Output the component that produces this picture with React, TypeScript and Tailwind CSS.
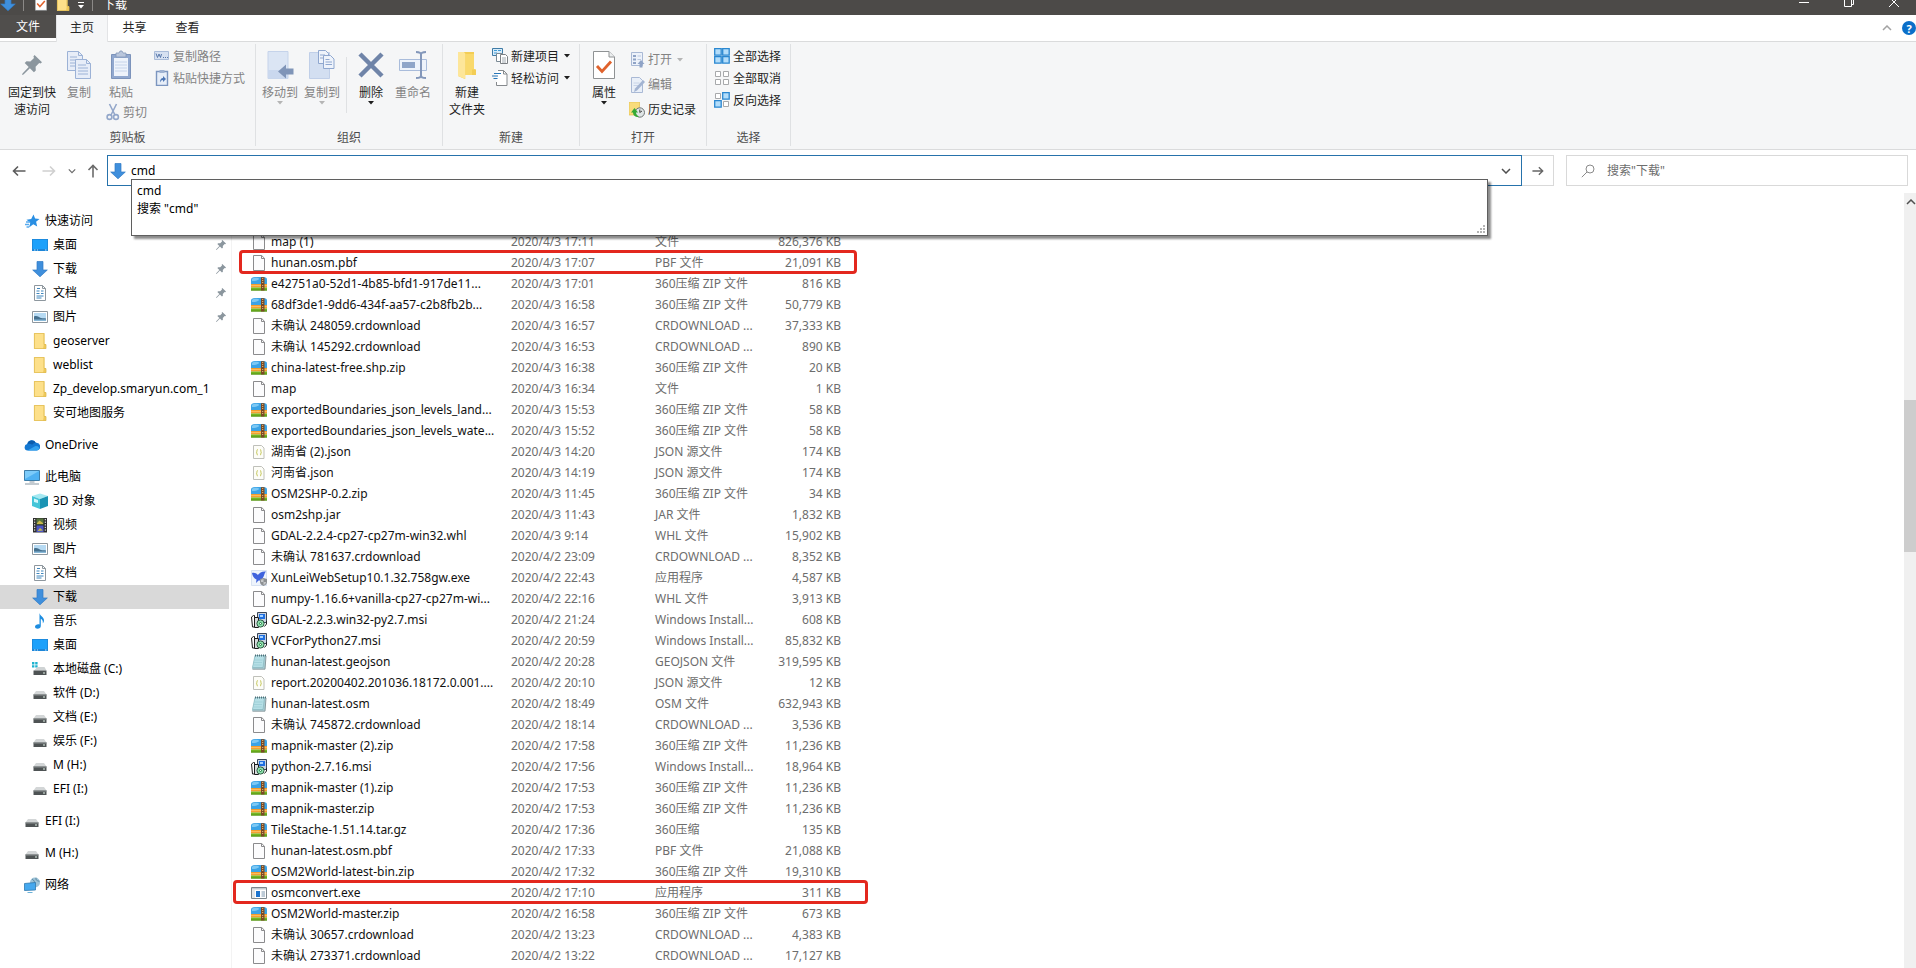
import type { ReactNode } from "react";
import clsx from "clsx";

/* ---------- icons ---------- */

type IconProps = { className?: string };

const DownArrow = ({ className = "size-4" }: IconProps) => (
  <svg viewBox="0 0 16 16" className={className}>
    <path d="M5 .5h6V9h4.300L8 15.800.7 9H5z" fill="#3f8fdc" stroke="#2f7ac4" strokeWidth=".7" />
  </svg>
);

const Folder = ({ className = "size-4" }: IconProps) => (
  <svg viewBox="0 0 16 16" className={className}>
    <path d="M2 0h10.500v11L14 11v5H2z" fill="#f7d774" />
    <path d="M2.400.4h9.200v15.200H2.400z" fill="#fde08a" />
    <path d="M12 11h2v5h-3z" fill="#efc95a" />
    <path d="M2.400.4h9.600v11l2 .2v4H2.400z" fill="none" stroke="#e0bb54" strokeWidth=".8" />
  </svg>
);

const Star = () => (
  <svg viewBox="0 0 16 16" className="size-4">
    <path d="m9.500 1.500 1.600 4 4.400.4-3.400 2.900 1.100 4.700-3.900-2.300L5 14.500l1.300-4.800-3.800-3 4.700-.6z" fill="#2a8fe3" />
    <path d="M2 9h4M1 11.500h4M2.500 14H5" stroke="#58abee" strokeWidth="1.300" />
  </svg>
);

const Desktop = () => (
  <svg viewBox="0 0 16 16" className="size-4">
    <path d="M0 2h16v12H0z" fill="#1d86d8" />
    <path d="M.8 2.800h14.400v9.200H.8z" fill="#1da1fb" />
    <path d="M2 13h1.500M5 13h1M13 13h1.500" stroke="#bfe3ff" strokeWidth="1" />
  </svg>
);

const Doc = () => (
  <svg viewBox="0 0 16 16" className="size-4">
    <path d="M2.500.5h8L13.500 3.500v12h-11z" fill="#fff" stroke="#8e979e" />
    <path d="M10.500.5v3h3" fill="none" stroke="#8e979e" />
    <path d="M4.500 6h3M4.500 8.500h3M4.500 11h7M4.500 13h5M9 6h2.500M9 8.500h2.500M5 3.500h3" stroke="#3f86bd" />
  </svg>
);

const Picture = () => (
  <svg viewBox="0 0 16 16" className="size-4">
    <path d="M.5 2.500h15v11H.5z" fill="#fff" stroke="#8e979e" />
    <path d="M2 4h12v8H2z" fill="#b6daf3" />
    <path d="M2 7.500c3-1.500 5 1 7 1.500s3 0 5 .5V12H2z" fill="#46718f" />
    <path d="M2 10.500h12V12H2z" fill="#89b9d8" />
  </svg>
);

const Cloud = () => (
  <svg viewBox="0 0 16 16" className="size-4">
    <path d="M3.500 13.500a3.300 3.300 0 0 1-.3-6.500 4.600 4.600 0 0 1 8.600-1.300 3.900 3.900 0 0 1 .9 7.800z" fill="#1478d2" />
    <path d="M3.400 7a4.600 4.600 0 0 1 8.400-1.300c-1.800 0-3 1-3.500 2C6.500 6.500 5 6.500 3.400 7z" fill="#0b5cad" />
    <path d="M3.500 13.500 11 9.200c1.500-.3 3 .1 4 1.100.8 1.700-.5 3.200-2.300 3.200z" fill="#35a4f0" />
  </svg>
);

const Computer = () => (
  <svg viewBox="0 0 16 16" className="size-4">
    <path d="M.5 1.500h15v10H.5z" fill="#4eb1f2" stroke="#3e7ea9" />
    <path d="M1 2h14L1 10z" fill="#7ccbfa" />
    <path d="M5.500 13h5M1 15h14" stroke="#8797a3" />
  </svg>
);

const Cube = () => (
  <svg viewBox="0 0 16 16" className="size-4">
    <path d="m0 3 8-2.500L16 3 8 6z" fill="#a5e9f2" />
    <path d="M0 3v10l8 3V6z" fill="#45c5d8" />
    <path d="M16 3v10l-8 3V6z" fill="#1a93b3" />
    <path d="M2 5.500 6 7v3L2 9z" fill="#d4f7fb" />
  </svg>
);

const Film = () => (
  <svg viewBox="0 0 16 16" className="size-4">
    <path d="M1 1h14v14.500H1z" fill="#2e2e2e" />
    <path d="M4.500 1.500h7v6h-7z" fill="#56743e" />
    <path d="M4.500 8.500h7V15h-7z" fill="#4d57c4" />
    <path d="m5 6 2.500-2.500L11 6v1H5zM5.500 14 8 11l3 2.500" fill="#c9b84a" />
    <path d="M2.700 2v13M13.300 2v13" stroke="#fff" strokeWidth="1" strokeDasharray="1.300 1.300" />
  </svg>
);

const Music = () => (
  <svg viewBox="0 0 16 16" className="size-4">
    <path d="M7.500 0c.5 3 4.500 4 4.500 7.200 0 1.300-.5 2.300-1.200 3 .4-2.200-.5-3.700-2-4.400V13c0 1.700-1.400 2.800-3.200 2.800-1.500 0-2.600-.8-2.600-2 0-1.500 1.600-2.600 3.300-2.600.4 0 .8 0 1.200.2z" fill="#1d8de0" />
  </svg>
);

const Drive = () => (
  <svg viewBox="0 0 16 16" className="size-4">
    <path d="M4 6h8l2.500 3.500h-13z" fill="#d3d6d7" />
    <path d="M1.500 9.500h13v4.500h-13z" fill="#4e5354" />
    <path d="M1.500 9.300h13v1.200h-13z" fill="#8a9091" />
    <path d="M11 12h2" stroke="#dff2e6" strokeWidth="1.200" />
  </svg>
);

const SystemDrive = () => (
  <svg viewBox="0 0 16 16" className="size-4">
    <path d="M0 1h2.400v2.400H0zM3.200 1h2.400v2.400H3.200zM0 4.200h2.400v2.400H0zM3.200 4.200h2.400v2.400H3.200z" fill="#1eb2cf" />
    <path d="M5.500 6h7l2 3.500H2z" fill="#cfd3d4" />
    <path d="M1.500 9.500h13V14h-13z" fill="#4e5354" />
    <path d="M11 12h2" stroke="#dff2e6" strokeWidth="1.200" />
  </svg>
);

const Network = () => (
  <svg viewBox="0 0 16 16" className="size-4">
    <circle cx="11" cy="5.500" r="5" fill="#9dc3d8" />
    <path d="M8 2c2 1 3 3 2.500 5M12 .8c-.5 2 .5 3 3.500 3.500" fill="none" stroke="#5d8aa3" />
    <path d="m.5 6.500 11-1v7.500l-11 .5z" fill="#45a8ee" stroke="#2f78ae" strokeWidth=".8" />
    <path d="M3.500 15.500h5" stroke="#6db2d8" />
  </svg>
);

const Pin = ({ className = "size-3" }: IconProps) => (
  <svg viewBox="0 0 20 20" className={className} fill="#8b969e">
    <path d="M12.500 0 20 7.200l-1.500 1.300-1.300-.4-3.600 3.700.2 3.700-1.900 1.700-4-4L1.500 19.500 0 20l.5-1.500 6.200-6.400-4-4L4.500 6.300l3.900.1L12 3l-.6-1.600z" />
  </svg>
);

const Page = () => (
  <svg viewBox="0 0 16 16" className="size-4">
    <path d="M2.500.5h8.200l2.800 2.800v12.200h-11z" fill="#fcfcfd" stroke="#8b8b8d" />
    <path d="M10.500.5v3h3" fill="none" stroke="#8b8b8d" />
  </svg>
);

const Zip = () => (
  <svg viewBox="0 0 16 16" className="size-4">
    <path d="M0 3.500C0 2 1.500 1 4 1h8c3 0 4 1.200 4 2.500V9H0z" fill="#3ba3e6" />
    <path d="M1 3c1-1.500 6-1.500 7-.5S5 5.500 1 5z" fill="#7cc8f4" />
    <path d="M0 8h16v3.500H0z" fill="#f39c2b" />
    <path d="M0 9.300h16v.8H0z" fill="#ffc971" />
    <path d="M0 11.500h16v3H0z" fill="#74b722" />
    <path d="M0 13.600h16v.9H0z" fill="#4f8c15" />
    <path d="M10 1.200h3.500v13.300H10z" fill="#7a4a26" />
    <path d="M11.700 2v5M11.700 9v4" stroke="#f1c27a" strokeDasharray="1 1" />
  </svg>
);

const Json = () => (
  <svg viewBox="0 0 16 16" className="size-4">
    <path d="M2.500 1.500h8l2.500 2.500v10.500H2.500z" fill="#fdfdf8" stroke="#bfc0ba" />
    <path d="M6.800 5.500c-1.300 0-.5 2-1.300 2.700.8.800 0 2.800 1.300 2.800M9 5.500c1.300 0 .5 2 1.300 2.700C9.500 9 10.300 11 9 11" fill="none" stroke="#c3c552" />
  </svg>
);

const Msi = () => (
  <svg viewBox="0 0 16 16" className="size-4">
    <path d="M6.500.5h9v10h-9z" fill="#c9d3df" stroke="#39465a" />
    <path d="M8 2h6v5H8z" fill="#1f6fe0" />
    <path d="M9 3h3v2H9z" fill="#a5d2ff" />
    <path d="M.5 5 2.500 3.500h1V15h-2z" fill="#fff" stroke="#1c1c1c" />
    <path d="M3.500 5.500h4v10h-4z" fill="#d8dbdd" stroke="#1c1c1c" />
    <circle cx="9.500" cy="11.500" r="3.600" fill="#8fe0ad" stroke="#2f5a43" />
    <circle cx="9.500" cy="11.500" r="1" fill="#fff" stroke="#1d7b3f" />
    <path d="M13.500 14.500 15.500 12V9" stroke="#222" fill="none" />
  </svg>
);

const Note = () => (
  <svg viewBox="0 0 16 16" className="size-4">
    <path d="M4 1.500h11l-1 13.500H1z" fill="#a8cdd4" />
    <path d="M4 1.500h9.500l-1.500 12H1.500z" fill="#b5dfe6" stroke="#7fb2bb" strokeWidth=".6" />
    <path d="M3.500 6h8M3 8.500h8M2.600 11h8" stroke="#98cbd3" strokeWidth=".7" />
    <path d="M4 1.500h11" stroke="#4d6f78" strokeWidth="2" strokeDasharray="1 1" />
    <path d="m15 2-1 13.200H1.500" fill="none" stroke="#8a9ba0" />
  </svg>
);

const Bird = () => (
  <svg viewBox="0 0 16 16" className="size-4">
    <path d="M.5.5h15v15H.5z" fill="#eef4fc" stroke="#cfdced" strokeWidth=".8" />
    <path d="M1 3c2.500-.6 4.500.4 5.800 2C8.500 3 11 1 15 1.500 13 3 13.500 6 11.500 8.500c-1 1.500-2.500 2.300-4 2L5 13l.5-3.500C3 8.500 1.500 6 1 3z" fill="#3f63dd" />
    <path d="M12.500 8 16 9v3c0 2-1.500 3.300-3.500 4-2-.7-3.500-2-3.500-4V9z" fill="#8d9093" />
    <path d="M12.500 9v6c1.500-.6 2.500-1.600 2.500-3H10V9.700z" fill="#c6c8ca" />
  </svg>
);

const Exe = () => (
  <svg viewBox="0 0 16 16" className="size-4">
    <path d="M.5 2.500h15v11H.5z" fill="#fff" stroke="#7c868d" />
    <path d="M1 3h14v1.500H1z" fill="#c3cbd0" />
    <path d="M1 4.500h3v8.500H1z" fill="#e3e7e9" />
    <path d="M5 6h4v6H5z" fill="#1b74cf" />
    <path d="M10.500 7h3.500M10.500 9h3.500M10.500 11h3.500" stroke="#7c98b0" />
  </svg>
);

const PropsDoc = ({ className = "size-4" }: IconProps) => (
  <svg viewBox="0 0 22 28" className={className}>
    <path d="M.5.5h15.500l5.500 5.500v21.500H.5z" fill="#fff" stroke="#8f9294" />
    <path d="M16 .5V6h5.500" fill="#eceeef" stroke="#8f9294" />
    <path d="m4 15 5 5.500 9-10" fill="none" stroke="#e0622c" strokeWidth="2.800" />
  </svg>
);

const CopyBig = () => (
  <svg viewBox="0 0 26 30" className="h-[30px] w-[26px]" fill="#e7edf8" stroke="#9cb2d6">
    <path d="M1.500 1.500h11l4 4v15h-15z" />
    <path d="M12.500 1.500v4h4M4 7h7M4 10h7M4 13h6M4 16h6" fill="none" />
    <path d="M9.500 9.500h11l4 4v15h-15z" />
    <path d="M20.500 9.500v4h4M12 15h8M12 18h10M12 21h10M12 24h10" fill="none" />
  </svg>
);

const PasteBig = () => (
  <svg viewBox="0 0 22 30" className="h-[30px] w-[22px]">
    <path d="M1.500 4.500h19v24h-19z" fill="#91a8cf" stroke="#7c93bb" />
    <path d="M4 8h14v18H4z" fill="#eef3fb" />
    <path d="M5 12h12M5 15h12M5 18h12M5 21h12" stroke="#c6d4ea" />
    <path d="M6 3h3l1-2h2l1 2h3v4H6z" fill="#b9c6dc" stroke="#8497b8" strokeWidth=".8" />
  </svg>
);

const CopyPathIcon = () => (
  <svg viewBox="0 0 16 16" className="size-4">
    <path d="M.5 3.500h14v8H.5z" fill="#d7e1f1" stroke="#a9bbd8" />
    <path d="m2 5.500 1.500 4L5 6l1.500 3.500L7.500 6M9 9.500h1M11 9.500h1M13 9.500h1" fill="none" stroke="#5878ab" />
  </svg>
);

const PasteLinkIcon = () => (
  <svg viewBox="0 0 16 16" className="size-4">
    <path d="M2.500 1.500h11v14h-11z" fill="#e7eef8" stroke="#7b95bf" strokeWidth="1.400" />
    <path d="M5.500 0h5v3h-5z" fill="#9fb2d1" />
    <path d="M6 12.500c0-3 1-4.500 3-4.500V6l3 3-3 3v-2c-1.500 0-2 .8-3 2.500z" fill="#4d76b4" />
  </svg>
);

const Scissors = () => (
  <svg viewBox="0 0 14 18" className="h-[18px] w-[14px]" fill="none" stroke="#93a7ca" strokeWidth="1.600">
    <path d="M3.500 1 9 12M10.500 1 5 12" />
    <circle cx="3.500" cy="14" r="2.400" />
    <circle cx="10" cy="14" r="2.400" />
  </svg>
);

const MoveTo = () => (
  <svg viewBox="0 0 28 30" className="h-[30px] w-[28px]">
    <path d="M2 1.500h20v27H2z" fill="#dbe5f4" stroke="#c5d3ea" />
    <path d="M2 20h20v8.500H2z" fill="#cad8ee" />
    <path d="m12 21.500 8-7v4h7.500v6H20v4z" fill="#8095b8" />
  </svg>
);

const CopyTo = () => (
  <svg viewBox="0 0 28 30" className="h-[30px] w-[28px]">
    <path d="M1.500 2.500h20v26h-20z" fill="#d3dff1" stroke="#c0cfe8" />
    <g fill="#eef3fb" stroke="#8fa7cf">
      <path d="M10.500.5h7l3 3v10h-10z" />
      <path d="M12 5h5M12 8h4" />
      <path d="M15.500 5.500h7l3.500 3.500v9.500H15.500z" />
      <path d="M17.500 9.500h4M17.500 12h6.500M17.500 14.500h6.500" />
    </g>
  </svg>
);

const DeleteX = () => (
  <svg viewBox="0 0 26 28" className="h-[28px] w-[26px]">
    <path d="m2 3 22 22M24 3 2 25" stroke="#6f84a8" strokeWidth="4.500" />
  </svg>
);

const Rename = () => (
  <svg viewBox="0 0 30 30" className="h-[30px] w-[30px]">
    <path d="M1.500 9.500h27v11h-27z" fill="#eef3fb" stroke="#a9bcdb" />
    <path d="M4 12h13v6H4z" fill="#8fa5c9" />
    <path d="M18 2c3 0 5 .3 5 2.500v21c0 2.200-2 2.500-5 2.500M28 2c-3 0-5 .3-5 2.500v21c0 2.200 2 2.500 5 2.500" fill="none" stroke="#8397ba" strokeWidth="2" />
  </svg>
);

const FolderBig = () => (
  <svg viewBox="0 0 20 28" className="h-[28px] w-[20px]">
    <path d="M1 1h16v17l2 .5V24H8v4l-7-3z" fill="#f3cd55" />
    <path d="M1 1h6l1.500 2v25L1 25z" fill="#fde69a" />
    <path d="M8.500 3H17v15.500h-2V24H8.500z" fill="#f9d96c" />
  </svg>
);

const NewItem = () => (
  <svg viewBox="0 0 16 16" className="size-4">
    <path d="M.5.500h10v7H.5z" fill="#d8ecfa" stroke="#3f7ba6" />
    <path d="M2 2.500h3M6 2.500h3M2 5h3" stroke="#3f9bd6" />
    <path d="M4.500 5.500h6v8h-6z" fill="#fff" stroke="#7b8a95" />
    <path d="M8.500 6.500h5l2 2v7h-7z" fill="#fff" stroke="#7b7f83" />
    <path d="M10 10h4M10 12h4M10 14h4" stroke="#a2aab0" />
  </svg>
);

const EasyAccess = () => (
  <svg viewBox="0 0 16 16" className="size-4">
    <path d="M4.500.5h7l3.500 3.500v11.500H4.500z" fill="#fff" />
    <path d="M6 .5h5.500L15 4v11.500H4.500V12M11.500.5V4H15" fill="none" stroke="#85898d" />
    <path d="M2 3.500h7M0 6h6M1.500 8.500h4" stroke="#2877b8" strokeWidth="1.200" />
  </svg>
);

const OpenIcon = () => (
  <svg viewBox="0 0 16 16" className="size-4">
    <path d="M2.500.5h11v13h-11z" fill="#edf2fa" stroke="#a9b9d5" />
    <path d="M4 3h3v2H4zM4 6.500h3v2H4zM4 10h3v2H4z" fill="#8fa3c6" />
    <path d="M8.500 4H12M8.500 7.500H12" stroke="#b9c7df" />
    <path d="m12 8 3.500 4h-2v3.500h-3V12h-2z" fill="#8fa3c6" />
  </svg>
);

const EditIcon = () => (
  <svg viewBox="0 0 16 16" className="size-4">
    <path d="M2.500.5h8l3 3v12h-11z" fill="#e9eff8" stroke="#a9b9d5" />
    <path d="M4.500 6h6M4.500 8.500h5" stroke="#c8d4e8" />
    <path d="M5 15 6 11.500 14 3l2 2-8 8.500z" fill="#a3b4d2" />
  </svg>
);

const HistoryIcon = () => (
  <svg viewBox="0 0 16 16" className="size-4">
    <path d="M0 0h10.500v13H0z" fill="#f9dc7b" stroke="#e2bf4e" strokeWidth=".7" />
    <circle cx="10.800" cy="10.500" r="4.700" fill="#dfe5e6" stroke="#6e7475" />
    <path d="M10.800 7.500v3l2.200-1.500" fill="none" stroke="#444" />
    <path d="M10 14.800c-3 .6-6-1-6-4.300H2L5.500 6 9 10.500H7c0 1.800 1.200 3 3 4.300z" fill="#35a936" />
  </svg>
);

const SelectAll = () => (
  <svg viewBox="0 0 16 16" className="size-4">
    <path d="M.7.7h6.500v6.500H.7zM8.700.7h6.500v6.500H8.700zM.7 8.700h6.500v6.500H.7zM8.700 8.700h6.500v6.500H8.700z" fill="#b3ddfa" stroke="#2a87d0" strokeWidth="1.300" />
  </svg>
);

const SelectNone = () => (
  <svg viewBox="0 0 16 16" className="size-4">
    <path d="M1.500 1.500h5v5h-5zM9.500 1.500h5v5h-5zM1.500 9.500h5v5h-5zM9.500 9.500h5v5h-5z" fill="#fff" stroke="#a7a9ab" />
  </svg>
);

const Invert = () => (
  <svg viewBox="0 0 16 16" className="size-4">
    <path d="M1.500 1.500h5v5h-5zM9.500 9.500h5v5h-5z" fill="#fff" stroke="#a7a9ab" />
    <path d="M8.700.7h6.500v6.500H8.700zM.7 8.700h6.500v6.500H.7z" fill="#b3ddfa" stroke="#2a87d0" strokeWidth="1.300" />
  </svg>
);

const Caret = ({ className = "text-[#1e1e1e]" }: IconProps) => (
  <svg viewBox="0 0 6 4" className={clsx("h-1 w-1.5 shrink-0", className)}>
    <path d="M0 0h6L3 3.500z" fill="currentColor" />
  </svg>
);

const Chevron = ({ className }: IconProps) => (
  <svg viewBox="0 0 10 6" className={className}>
    <path d="m1 1 4 4 4-4" fill="none" stroke="currentColor" strokeWidth="1.500" />
  </svg>
);

const ArrowLine = ({ className }: IconProps) => (
  <svg viewBox="0 0 14 14" className={className}>
    <path d="M13.500 7H1.500M6 2.500 1.500 7 6 11.500" fill="none" stroke="currentColor" strokeWidth="1.600" />
  </svg>
);

/* ---------- data ---------- */

type Place = { label: string; icon: () => ReactNode; top?: boolean; pinned?: boolean; gap?: boolean; active?: boolean };

const places: Place[] = [
  { label: "快速访问", icon: Star, top: true },
  { label: "桌面", icon: Desktop, pinned: true },
  { label: "下载", icon: () => <DownArrow />, pinned: true },
  { label: "文档", icon: Doc, pinned: true },
  { label: "图片", icon: Picture, pinned: true },
  { label: "geoserver", icon: () => <Folder /> },
  { label: "weblist", icon: () => <Folder /> },
  { label: "Zp_develop.smaryun.com_1", icon: () => <Folder /> },
  { label: "安可地图服务", icon: () => <Folder /> },
  { label: "OneDrive", icon: Cloud, top: true, gap: true },
  { label: "此电脑", icon: Computer, top: true, gap: true },
  { label: "3D 对象", icon: Cube },
  { label: "视频", icon: Film },
  { label: "图片", icon: Picture },
  { label: "文档", icon: Doc },
  { label: "下载", icon: () => <DownArrow />, active: true },
  { label: "音乐", icon: Music },
  { label: "桌面", icon: Desktop },
  { label: "本地磁盘 (C:)", icon: SystemDrive },
  { label: "软件 (D:)", icon: Drive },
  { label: "文档 (E:)", icon: Drive },
  { label: "娱乐 (F:)", icon: Drive },
  { label: "M (H:)", icon: Drive },
  { label: "EFI (I:)", icon: Drive },
  { label: "EFI (I:)", icon: Drive, top: true, gap: true },
  { label: "M (H:)", icon: Drive, top: true, gap: true },
  { label: "网络", icon: Network, top: true, gap: true },
];

const fileIcons = { page: Page, zip: Zip, json: Json, msi: Msi, note: Note, bird: Bird, exe: Exe };

type FileRow = [icon: keyof typeof fileIcons, name: string, date: string, type: string, size: string];

const files: FileRow[] = [
  ["page", "map (1)", "2020/4/3 17:11", "文件", "826,376 KB"],
  ["page", "hunan.osm.pbf", "2020/4/3 17:07", "PBF 文件", "21,091 KB"],
  ["zip", "e42751a0-52d1-4b85-bfd1-917de11...", "2020/4/3 17:01", "360压缩 ZIP 文件", "816 KB"],
  ["zip", "68df3de1-9dd6-434f-aa57-c2b8fb2b...", "2020/4/3 16:58", "360压缩 ZIP 文件", "50,779 KB"],
  ["page", "未确认 248059.crdownload", "2020/4/3 16:57", "CRDOWNLOAD ...", "37,333 KB"],
  ["page", "未确认 145292.crdownload", "2020/4/3 16:53", "CRDOWNLOAD ...", "890 KB"],
  ["zip", "china-latest-free.shp.zip", "2020/4/3 16:38", "360压缩 ZIP 文件", "20 KB"],
  ["page", "map", "2020/4/3 16:34", "文件", "1 KB"],
  ["zip", "exportedBoundaries_json_levels_land...", "2020/4/3 15:53", "360压缩 ZIP 文件", "58 KB"],
  ["zip", "exportedBoundaries_json_levels_wate...", "2020/4/3 15:52", "360压缩 ZIP 文件", "58 KB"],
  ["json", "湖南省 (2).json", "2020/4/3 14:20", "JSON 源文件", "174 KB"],
  ["json", "河南省.json", "2020/4/3 14:19", "JSON 源文件", "174 KB"],
  ["zip", "OSM2SHP-0.2.zip", "2020/4/3 11:45", "360压缩 ZIP 文件", "34 KB"],
  ["page", "osm2shp.jar", "2020/4/3 11:43", "JAR 文件", "1,832 KB"],
  ["page", "GDAL-2.2.4-cp27-cp27m-win32.whl", "2020/4/3 9:14", "WHL 文件", "15,902 KB"],
  ["page", "未确认 781637.crdownload", "2020/4/2 23:09", "CRDOWNLOAD ...", "8,352 KB"],
  ["bird", "XunLeiWebSetup10.1.32.758gw.exe", "2020/4/2 22:43", "应用程序", "4,587 KB"],
  ["page", "numpy-1.16.6+vanilla-cp27-cp27m-wi...", "2020/4/2 22:16", "WHL 文件", "3,913 KB"],
  ["msi", "GDAL-2.2.3.win32-py2.7.msi", "2020/4/2 21:24", "Windows Install...", "608 KB"],
  ["msi", "VCForPython27.msi", "2020/4/2 20:59", "Windows Install...", "85,832 KB"],
  ["note", "hunan-latest.geojson", "2020/4/2 20:28", "GEOJSON 文件", "319,595 KB"],
  ["json", "report.20200402.201036.18172.0.001....", "2020/4/2 20:10", "JSON 源文件", "12 KB"],
  ["note", "hunan-latest.osm", "2020/4/2 18:49", "OSM 文件", "632,943 KB"],
  ["page", "未确认 745872.crdownload", "2020/4/2 18:14", "CRDOWNLOAD ...", "3,536 KB"],
  ["zip", "mapnik-master (2).zip", "2020/4/2 17:58", "360压缩 ZIP 文件", "11,236 KB"],
  ["msi", "python-2.7.16.msi", "2020/4/2 17:56", "Windows Install...", "18,964 KB"],
  ["zip", "mapnik-master (1).zip", "2020/4/2 17:53", "360压缩 ZIP 文件", "11,236 KB"],
  ["zip", "mapnik-master.zip", "2020/4/2 17:53", "360压缩 ZIP 文件", "11,236 KB"],
  ["zip", "TileStache-1.51.14.tar.gz", "2020/4/2 17:36", "360压缩", "135 KB"],
  ["page", "hunan-latest.osm.pbf", "2020/4/2 17:33", "PBF 文件", "21,088 KB"],
  ["zip", "OSM2World-latest-bin.zip", "2020/4/2 17:32", "360压缩 ZIP 文件", "19,310 KB"],
  ["exe", "osmconvert.exe", "2020/4/2 17:10", "应用程序", "311 KB"],
  ["zip", "OSM2World-master.zip", "2020/4/2 16:58", "360压缩 ZIP 文件", "673 KB"],
  ["page", "未确认 30657.crdownload", "2020/4/2 13:23", "CRDOWNLOAD ...", "4,383 KB"],
  ["page", "未确认 273371.crdownload", "2020/4/2 13:22", "CRDOWNLOAD ...", "17,127 KB"],
];

// red marker boxes drawn round two of the rows
const marks: Record<string, string> = {
  "hunan.osm.pbf": "-left-3 w-[618px]",
  "osmconvert.exe": "-left-[18px] w-[635px]",
};

/* ---------- ribbon ---------- */

function Group({ label, className, children }: { label: string; className: string; children: ReactNode }) {
  return (
    <div className={clsx("flex shrink-0 flex-col border-r border-[#dfe1e3]", className)}>
      <div className="flex flex-1 items-start pt-px">{children}</div>
      <div className="text-center text-[#4d4d4d]">{label}</div>
    </div>
  );
}

type BigProps = { icon: ReactNode; label: ReactNode; className?: string; disabled?: boolean; menu?: boolean };

function BigButton({ icon, label, className = "w-[42px]", disabled, menu }: BigProps) {
  return (
    <button className={clsx("flex shrink-0 flex-col items-center pt-1", className, disabled ? "text-[#838383]" : "text-[#1e1e1e]")}>
      <span className="flex h-8 items-center justify-center">{icon}</span>
      <span className="mt-[3px] whitespace-nowrap">{label}</span>
      {menu && <Caret className={disabled ? "text-[#b5b5b5]" : "text-[#1e1e1e]"} />}
    </button>
  );
}

type SmallProps = { icon: ReactNode; label: string; className?: string; disabled?: boolean; menu?: boolean };

function SmallButton({ icon, label, className = "h-[22px]", disabled, menu }: SmallProps) {
  return (
    <button className={clsx("flex items-center gap-[3px] whitespace-nowrap", className, disabled ? "text-[#838383]" : "text-[#1e1e1e]")}>
      {icon}
      {label}
      {menu && <Caret className={disabled ? "ml-0.5 text-[#b5b5b5]" : "ml-0.5 text-[#1e1e1e]"} />}
    </button>
  );
}

function Ribbon() {
  return (
    <div className="flex h-[108px] border-b border-[#dadbdc] bg-[#f5f6f7] pt-0.5 pb-[3px]">
      <Group label="剪贴板" className="w-64">
        <BigButton className="ml-1 w-14" icon={<Pin className="size-5" />} label={<>固定到快<br />速访问</>} />
        <BigButton className="w-[38px]" icon={<CopyBig />} label="复制" disabled />
        <div className="flex w-14 flex-col items-start">
          <BigButton className="w-[46px]" icon={<PasteBig />} label="粘贴" disabled />
          <SmallButton className="ml-2 h-[22px]" icon={<Scissors />} label="剪切" disabled />
        </div>
        <div className="flex flex-col items-start">
          <SmallButton icon={<CopyPathIcon />} label="复制路径" disabled />
          <SmallButton icon={<PasteLinkIcon />} label="粘贴快捷方式" disabled />
        </div>
      </Group>
      <Group label="组织" className="w-[187px]">
        <div className="ml-[3px] flex">
          <BigButton icon={<MoveTo />} label="移动到" disabled menu />
          <BigButton icon={<CopyTo />} label="复制到" disabled menu />
          <span className="mx-[3px] mt-3 h-14 w-px bg-[#dfe1e3]" />
          <BigButton icon={<DeleteX />} label="删除" menu />
          <BigButton icon={<Rename />} label="重命名" disabled />
        </div>
      </Group>
      <Group label="新建" className="w-[137px]">
        <BigButton className="ml-[3px] w-[42px]" icon={<FolderBig />} label={<>新建<br />文件夹</>} />
        <div className="ml-1 flex flex-col items-start">
          <SmallButton icon={<NewItem />} label="新建项目" menu />
          <SmallButton icon={<EasyAccess />} label="轻松访问" menu />
        </div>
      </Group>
      <Group label="打开" className="w-[127px]">
        <BigButton className="ml-[3px] w-[42px]" icon={<PropsDoc className="h-7 w-[22px]" />} label="属性" menu />
        <div className="ml-1 flex flex-col items-start pt-0.5">
          <SmallButton className="h-[25px]" icon={<OpenIcon />} label="打开" disabled menu />
          <SmallButton className="h-[25px]" icon={<EditIcon />} label="编辑" disabled />
          <SmallButton className="h-[25px]" icon={<HistoryIcon />} label="历史记录" />
        </div>
      </Group>
      <Group label="选择" className="w-[84px]">
        <div className="ml-[7px] flex flex-col items-start">
          <SmallButton icon={<SelectAll />} label="全部选择" />
          <SmallButton icon={<SelectNone />} label="全部取消" />
          <SmallButton icon={<Invert />} label="反向选择" />
        </div>
      </Group>
    </div>
  );
}

/* ---------- window ---------- */

function TitleBar() {
  return (
    <header className="flex h-[15px] shrink-0 items-end overflow-hidden bg-[#4c4a48] pb-1 text-white">
      <DownArrow className="size-4 shrink-0" />
      <span className="ml-[7px] h-4 w-px bg-[#8b8987]" />
      <PropsDoc className="ml-[11px] h-4 w-3 shrink-0" />
      <Folder className="ml-2 size-4 shrink-0" />
      <span className="ml-[7px] flex h-4 flex-col items-center justify-end gap-0.5 pb-0.5">
        <span className="h-px w-1.5 bg-white" />
        <Caret className="text-white" />
      </span>
      <span className="ml-2 h-4 w-px bg-[#8b8987]" />
      <span className="ml-2.5 leading-3">下载</span>
      <div className="ml-auto flex items-end">
        <button aria-label="最小化" className="flex w-[45px] justify-center">
          <svg viewBox="0 0 10 16" className="h-4 w-2.5"><path d="M0 7.500h10" stroke="#fff" /></svg>
        </button>
        <button aria-label="还原" className="flex w-[45px] justify-center">
          <svg viewBox="0 0 10 16" className="h-4 w-2.5" fill="none" stroke="#fff"><path d="M.5 4.500h7v7h-7zM2.500 4V2.500h7v7H8" /></svg>
        </button>
        <button aria-label="关闭" className="flex w-[45px] justify-center">
          <svg viewBox="0 0 10 16" className="h-4 w-2.5" fill="none" stroke="#fff"><path d="m0 2 10 10M10 2 0 12" /></svg>
        </button>
      </div>
    </header>
  );
}

function Tabs() {
  return (
    <nav className="flex h-[27px] shrink-0 items-stretch bg-white text-[#262626]">
      <div className="flex border-b border-[#dadbdc]">
        <button className="mb-[3px] w-14 bg-[#504e4c] text-white">文件</button>
      </div>
      <button className="w-[52px] border-x border-[#e3e4e6] bg-[#f5f6f7] pb-0.5">主页</button>
      <div className="flex flex-1 items-center border-b border-[#dadbdc]">
        <button className="w-[53px] pb-px">共享</button>
        <button className="w-[53px] pb-px">查看</button>
        <button aria-label="折叠功能区" className="ml-auto text-[#a3a3a3]">
          <Chevron className="h-1.5 w-2.5 rotate-180" />
        </button>
        <button aria-label="帮助" className="ml-2.5 flex size-3.5 items-center justify-center rounded-full bg-[#0b6fc9] text-[11px] font-bold text-white">?</button>
      </div>
    </nav>
  );
}

function AddressRow() {
  return (
    <div className="flex h-[43px] shrink-0 items-center pr-2 pb-0.5 pl-3">
      <button aria-label="后退" className="text-[#5c5c5c]"><ArrowLine className="size-3.5" /></button>
      <button aria-label="前进" className="ml-4 text-[#d0d0d0]"><ArrowLine className="size-3.5 rotate-180" /></button>
      <button aria-label="最近浏览" className="ml-3 text-[#6b6b6b]"><Chevron className="h-1.5 w-2" /></button>
      <button aria-label="上移" className="ml-2.5 text-[#6b6b6b]"><ArrowLine className="size-3.5 rotate-90" /></button>
      <div className="relative ml-[7px] flex h-[31px] flex-1 items-center border border-[#2672ab] pl-0.5">
        <DownArrow />
        <input aria-label="地址" defaultValue="cmd" className="ml-[5px] min-w-0 flex-1 bg-transparent text-black outline-none" />
        <button aria-label="历史地址" className="mr-2.5 text-[#4f4f4f]"><Chevron className="h-1.5 w-2.5" /></button>
        <ul className="absolute top-[23px] right-[33px] left-[23px] z-10 h-[57px] border border-[#5f5f5f] bg-white pt-0.5 pl-[5px] leading-[18px] text-black shadow-[3px_3px_2px_rgba(0,0,0,0.45)]">
          <li>cmd</li>
          <li>搜索 "cmd"</li>
          <li aria-hidden="true" className="absolute right-0.5 bottom-0.5">
            <svg viewBox="0 0 8 8" className="size-2" fill="#b4b4b4">
              <path d="M6 0h2v2H6zM3 3h2v2H3zM6 3h2v2H6zM0 6h2v2H0zM3 6h2v2H3zM6 6h2v2H6z" />
            </svg>
          </li>
        </ul>
      </div>
      <button aria-label="转到" className="flex h-[31px] w-8 items-center justify-center border border-l-0 border-[#d9d9d9] text-[#666]">
        <ArrowLine className="size-3 rotate-180" />
      </button>
      <label className="ml-3 flex h-[31px] w-[342px] items-center border border-[#d9d9d9] pl-3.5">
        <svg viewBox="0 0 14 14" className="size-3.5" fill="none" stroke="#8a8a8a">
          <circle cx="9" cy="5" r="4" />
          <path d="M6 8 .8 13.200" />
        </svg>
        <input aria-label="搜索" placeholder={'搜索"下载"'} className="ml-3 min-w-0 flex-1 outline-none placeholder:text-[#6d6d6d]" />
      </label>
    </div>
  );
}

function Sidebar() {
  return (
    <aside className="w-[232px] shrink-0 border-r border-[#f3f3f3] pt-4 pr-0.5">
      {places.map((p, i) => (
        <a
          key={i}
          href="#"
          className={clsx(
            "flex h-6 items-center gap-[5px] text-black",
            p.top ? "pl-6" : "pl-8",
            p.gap && "mt-2",
            p.active && "bg-[#d9d9d9]",
          )}
        >
          <p.icon />
          <span className="pb-0.5">{p.label}</span>
          {p.pinned && <span className="mr-[3px] ml-auto"><Pin className="size-2.5" /></span>}
        </a>
      ))}
    </aside>
  );
}

function FileTable() {
  return (
    <div className="flex-1 pt-[38px] pl-[19px]">
      <table aria-label="下载" className="table-fixed border-collapse">
        <colgroup>
          <col className="w-[260px]" />
          <col className="w-36" />
          <col className="w-[105px]" />
          <col className="w-[81px]" />
        </colgroup>
        <tbody>
          {files.map(([icon, name, date, type, size]) => {
            const Icon = fileIcons[icon];
            return (
              <tr key={name} className="h-[21px] text-[#6d6d6d]">
                <td className="relative p-0">
                  <span className="flex items-center gap-1 whitespace-nowrap text-[#111]">
                    <Icon />
                    {name}
                  </span>
                  {marks[name] && (
                    <span className={clsx("pointer-events-none absolute -top-0.5 h-6 rounded-sm border-3 border-[#e3281e]", marks[name])} />
                  )}
                </td>
                <td className="p-0 whitespace-nowrap">{date}</td>
                <td className="p-0 whitespace-nowrap">{type}</td>
                <td className="p-0 text-right whitespace-nowrap">{size}</td>
              </tr>
            );
          })}
        </tbody>
      </table>
    </div>
  );
}

export default function App() {
  return (
    <div className="flex h-screen flex-col overflow-hidden bg-white font-['Noto_Sans','Noto_Sans_CJK_SC',sans-serif] text-[12px] leading-[17px]">
      <TitleBar />
      <Tabs />
      <Ribbon />
      <AddressRow />
      <main className="flex min-h-0 flex-1">
        <Sidebar />
        <FileTable />
        {/* scrollbar */}
        <div className="flex w-3 shrink-0 flex-col bg-[#f0f0f0]">
          <div className="flex h-[17px] shrink-0 items-center justify-center pl-0.5 text-[#505050]">
            <Chevron className="h-1.5 w-2.5 rotate-180" />
          </div>
          <div className="mt-[190px] h-[152px] bg-[#cdcdcd]" />
        </div>
      </main>
    </div>
  );
}
